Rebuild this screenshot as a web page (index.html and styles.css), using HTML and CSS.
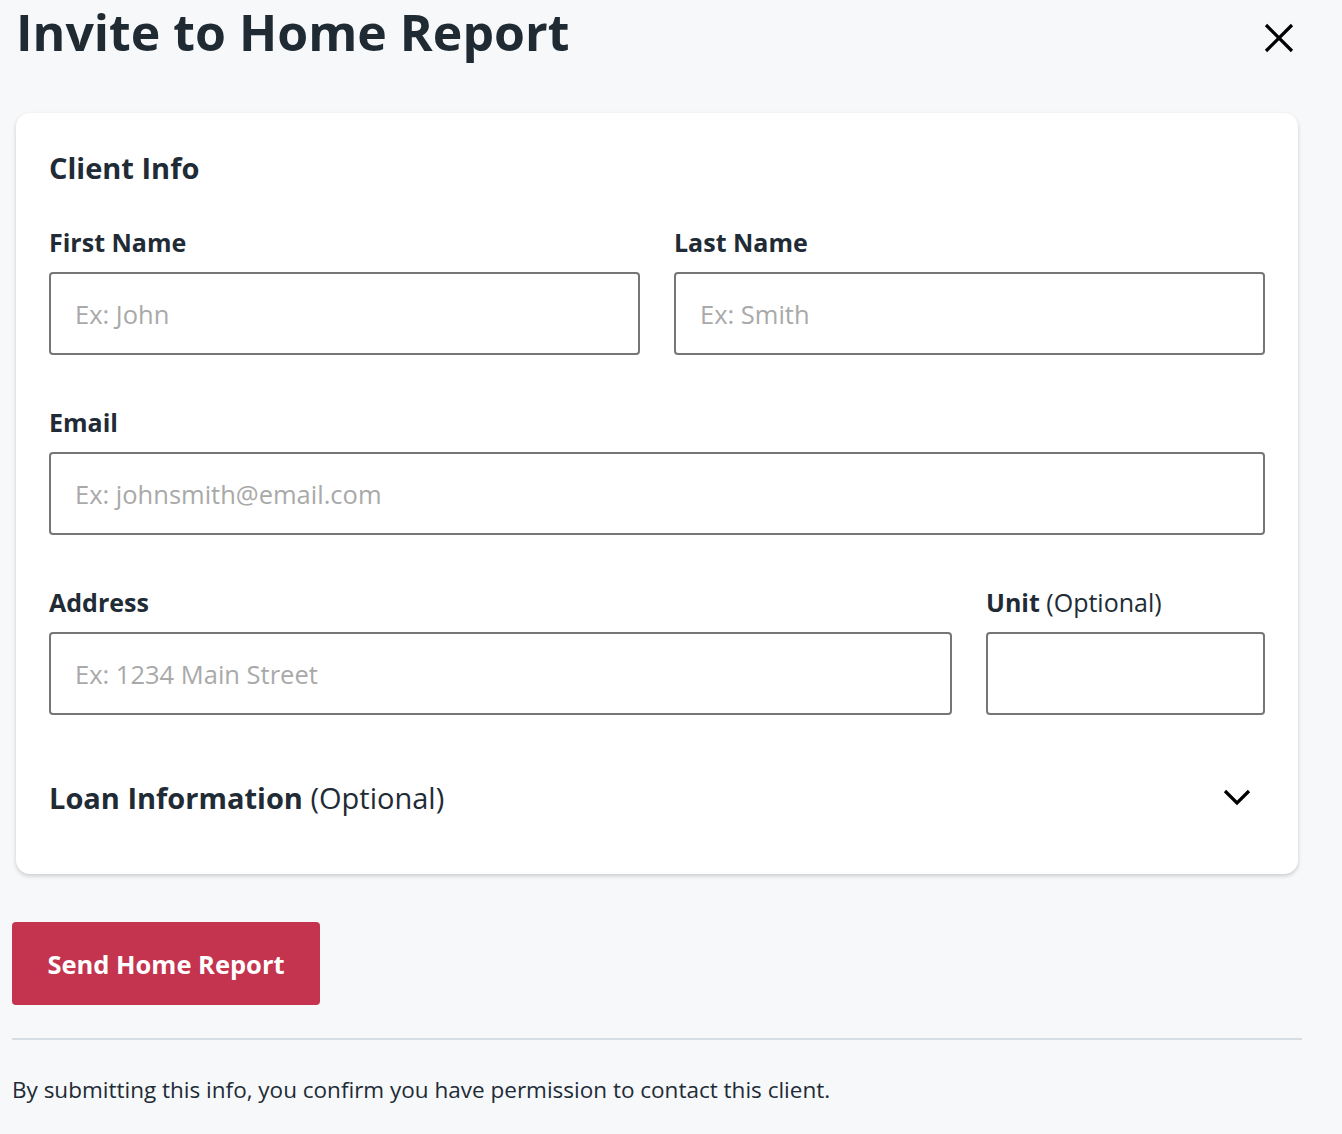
FILE: index.html
```html
<!DOCTYPE html>
<html lang="en">
<head>
  <meta charset="UTF-8">
  <meta name="viewport" content="width=device-width, initial-scale=1.0">
  <title>Invite to Home Report</title>
  <link rel="stylesheet" href="styles.css">
</head>
<body>

  <div class="invite-modal">

    <div class="modal-header">
      <h1>Invite to Home Report</h1>
      <button class="close-btn" aria-label="Close">
        <svg width="30" height="30" viewBox="0 0 30 30">
          <path d="M2 2 L28 28 M28 2 L2 28" stroke="#000" stroke-width="3.2" fill="none"/>
        </svg>
      </button>
    </div>

    <div class="client-card">
      <h2>Client Info</h2>

      <div class="form-row">
        <div class="form-group">
          <label for="firstName">First Name</label>
          <input type="text" id="firstName" placeholder="Ex: John">
        </div>
        <div class="form-group">
          <label for="lastName">Last Name</label>
          <input type="text" id="lastName" placeholder="Ex: Smith">
        </div>
      </div>

      <div class="form-group">
        <label for="email">Email</label>
        <input type="text" id="email" placeholder="Ex: johnsmith@email.com">
      </div>

      <div class="form-row address-row">
        <div class="form-group">
          <label for="address">Address</label>
          <input type="text" id="address" placeholder="Ex: 1234 Main Street">
        </div>
        <div class="form-group">
          <label for="unit">Unit <span class="optional">(Optional)</span></label>
          <input type="text" id="unit">
        </div>
      </div>

      <div class="loan-toggle">
        <span class="loan-title">Loan Information <span class="optional">(Optional)</span></span>
        <svg width="30" height="20" viewBox="0 0 30 20">
          <path d="M3 3 L15 15 L27 3" stroke="#000" stroke-width="3.2" fill="none"/>
        </svg>
      </div>
    </div>

    <button class="send-btn">Send Home Report</button>

    <hr class="divider">

    <p class="disclaimer">By submitting this info, you confirm you have permission to contact this client.</p>

  </div>

</body>
</html>
```

FILE: styles.css
```css
body {
  margin: 0;
  background-color: #f7f8fa;
  font-family: "Open Sans", Lato, Arial, sans-serif;
  color: #212b36;
}

.invite-modal {
  width: 1290px;
  padding-left: 12px;
}

.modal-header {
  display: flex;
  justify-content: space-between;
  align-items: flex-start;
  height: 113px;
}

h1 {
  margin: 0 0 0 4px;
  font-size: 50px;
  line-height: 64px;
  font-weight: 700;
  color: #1f2a33;
}

.close-btn {
  background: none;
  border: none;
  padding: 0;
  margin-top: 23px;
  margin-right: 8px;
  cursor: pointer;
}

.close-btn svg {
  display: block;
}

.client-card {
  margin: 0 4px;
  background-color: #fff;
  border-radius: 14px;
  box-shadow: 0 2px 4px rgba(0, 0, 0, 0.18);
  padding: 37px 33px 58px;
}

h2 {
  margin: 0 0 41px;
  font-size: 29px;
  line-height: 36px;
  font-weight: 700;
}

.form-row {
  display: flex;
  gap: 34px;
}

.form-row .form-group {
  flex: 1;
}

.address-row .form-group:last-child {
  flex: 0 0 279px;
}

.form-group {
  margin-bottom: 52px;
}

label {
  display: block;
  font-size: 25px;
  line-height: 30px;
  font-weight: 700;
  margin-bottom: 15px;
}

.optional {
  font-weight: 400;
}

input {
  display: block;
  width: 100%;
  height: 83px;
  box-sizing: border-box;
  border: 2px solid #767676;
  border-radius: 4px;
  padding: 0 24px;
  font-family: inherit;
  font-size: 25.5px;
  color: #212b36;
  background: #fff;
}

input::placeholder {
  color: #a9a9a9;
}

.loan-toggle {
  display: flex;
  justify-content: space-between;
  align-items: center;
  margin-top: 13px;
}

.loan-title {
  font-size: 29px;
  line-height: 36px;
  font-weight: 700;
}

.loan-toggle svg {
  margin-right: 13px;
}

.send-btn {
  display: block;
  margin-top: 48px;
  width: 308px;
  height: 83px;
  background-color: #c4344f;
  color: #fff;
  border: none;
  border-radius: 4px;
  font-family: inherit;
  font-size: 25.5px;
  font-weight: 700;
  cursor: pointer;
}

.divider {
  margin: 33px 0 0;
  border: none;
  border-top: 2px solid #d6dee4;
}

.disclaimer {
  margin: 36px 0 0;
  font-size: 22.5px;
  line-height: 28px;
}
```
